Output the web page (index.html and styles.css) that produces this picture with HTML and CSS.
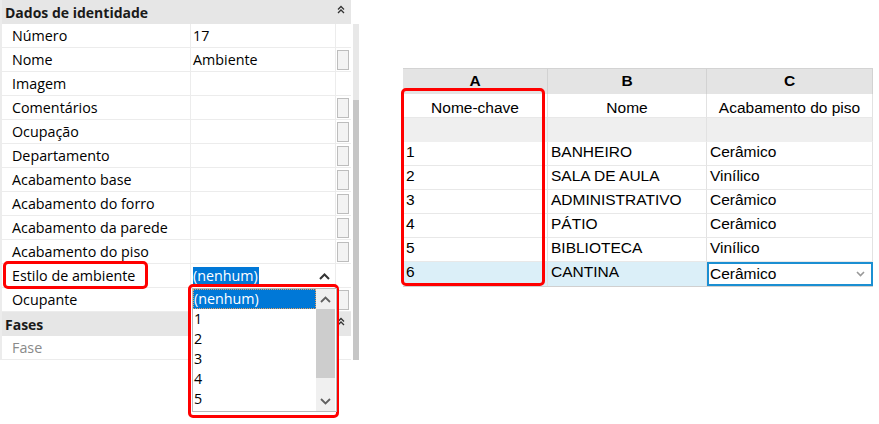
FILE: index.html
```html
<!DOCTYPE html>
<html>
<head>
<meta charset="utf-8">
<link rel="stylesheet" href="styles.css">
</head>
<body>
<div class="page">
  <div class="props">
    <div class="props-body">
      <div class="group-head"><span>Dados de identidade</span>
        <svg class="dbl" width="8" height="9" viewBox="0 0 8 9"><polyline points="1,4.5 4,1.5 7,4.5" fill="none" stroke="#333" stroke-width="1.3"/><polyline points="1,8 4,5 7,8" fill="none" stroke="#333" stroke-width="1.3"/></svg>
      </div>
      <div class="row"><div class="lbl">Número</div><div class="val">17</div><div class="bcell"></div></div>
      <div class="row"><div class="lbl">Nome</div><div class="val">Ambiente</div><div class="bcell"><div class="ebtn"></div></div></div>
      <div class="row"><div class="lbl">Imagem</div><div class="val"></div><div class="bcell"></div></div>
      <div class="row"><div class="lbl">Comentários</div><div class="val"></div><div class="bcell"><div class="ebtn"></div></div></div>
      <div class="row"><div class="lbl">Ocupação</div><div class="val"></div><div class="bcell"><div class="ebtn"></div></div></div>
      <div class="row"><div class="lbl">Departamento</div><div class="val"></div><div class="bcell"><div class="ebtn"></div></div></div>
      <div class="row"><div class="lbl">Acabamento base</div><div class="val"></div><div class="bcell"><div class="ebtn"></div></div></div>
      <div class="row"><div class="lbl">Acabamento do forro</div><div class="val"></div><div class="bcell"><div class="ebtn"></div></div></div>
      <div class="row"><div class="lbl">Acabamento da parede</div><div class="val"></div><div class="bcell"><div class="ebtn"></div></div></div>
      <div class="row"><div class="lbl">Acabamento do piso</div><div class="val"></div><div class="bcell"><div class="ebtn"></div></div></div>
      <div class="row"><div class="lbl">Estilo de ambiente</div><div class="val combo"><span class="sel">(nenhum)</span>
        <svg class="up" width="11" height="7" viewBox="0 0 11 7"><polyline points="1,6 5.5,1.5 10,6" fill="none" stroke="#333" stroke-width="2"/></svg></div><div class="bcell"></div></div>
      <div class="row"><div class="lbl">Ocupante</div><div class="val"></div><div class="bcell"><div class="ebtn"></div></div></div>
      <div class="group-head"><span>Fases</span>
        <svg class="dbl" width="8" height="9" viewBox="0 0 8 9"><polyline points="1,4.5 4,1.5 7,4.5" fill="none" stroke="#333" stroke-width="1.3"/><polyline points="1,8 4,5 7,8" fill="none" stroke="#333" stroke-width="1.3"/></svg>
      </div>
      <div class="row last"><div class="lbl muted">Fase</div><div class="val"></div><div class="bcell"></div></div>
    </div>
    <div class="vscroll"><div class="vtrack"></div><div class="vthumb"></div></div>

    <div class="mark mark-estilo"></div>

    <div class="dropdown">
      <div class="listbox">
        <div class="items">
          <div class="item active"><span>(nenhum)</span></div>
          <div class="item">1</div>
          <div class="item">2</div>
          <div class="item">3</div>
          <div class="item">4</div>
          <div class="item">5</div>
        </div>
        <div class="lscroll">
          <div class="arrow"><svg width="11" height="7" viewBox="0 0 11 7"><polyline points="1,6 5.5,1.5 10,6" fill="none" stroke="#606060" stroke-width="1.8"/></svg></div>
          <div class="lthumb"></div>
          <div class="lspace"></div>
          <div class="arrow"><svg width="11" height="7" viewBox="0 0 11 7"><polyline points="1,1 5.5,5.5 10,1" fill="none" stroke="#606060" stroke-width="1.8"/></svg></div>
        </div>
      </div>
    </div>
  </div>

  <div class="sheet">
    <div class="grid">
      <div class="hd">A</div><div class="hd">B</div><div class="hd">C</div>
      <div class="cell ctr">Nome-chave</div><div class="cell ctr">Nome</div><div class="cell ctr">Acabamento do piso</div>
      <div class="cell gray"></div><div class="cell gray"></div><div class="cell gray"></div>
      <div class="cell">1</div><div class="cell">BANHEIRO</div><div class="cell">Cerâmico</div>
      <div class="cell">2</div><div class="cell">SALA DE AULA</div><div class="cell">Vinílico</div>
      <div class="cell">3</div><div class="cell">ADMINISTRATIVO</div><div class="cell">Cerâmico</div>
      <div class="cell">4</div><div class="cell">PÁTIO</div><div class="cell">Cerâmico</div>
      <div class="cell">5</div><div class="cell">BIBLIOTECA</div><div class="cell">Vinílico</div>
      <div class="cell selrow">6</div><div class="cell selrow">CANTINA</div>
      <div class="cell editcell"><span>Cerâmico</span><svg width="9" height="6" viewBox="0 0 9 6"><polyline points="1,1 4.5,4.5 8,1" fill="none" stroke="#999" stroke-width="1.6"/></svg></div>
    </div>
    <div class="mark mark-col"></div>
  </div>
</div>
</body>
</html>
```

FILE: styles.css
```css
html, body { margin: 0; padding: 0; background: #fff; }
body { width: 879px; height: 424px; overflow: hidden; }

.page {
  display: flex;
  align-items: flex-start;
}

/* ---------- property panel ---------- */
.props {
  position: relative;
  display: flex;
  width: 359px;
  font-family: "Open Sans", "Noto Sans", sans-serif;
  font-size: 14.3px;
  color: #000;
}
.props-body {
  width: 350px;
  border-left: 2px solid #ececec;
}
.group-head {
  height: 24px;
  background: #e6e6e6;
  display: flex;
  align-items: center;
  justify-content: space-between;
  padding-left: 3px;
  padding-right: 6px;
  font-weight: 700;
  font-size: 14px;
  color: #1a1a1a;
  box-sizing: border-box;
}
.dbl { margin-top: -5px; }
.row {
  display: flex;
  height: 24px;
  border-bottom: 1px solid #ececec;
  box-sizing: border-box;
}
.lbl {
  width: 189px;
  padding-left: 10px;
  box-sizing: border-box;
  border-right: 1px solid #ececec;
  line-height: 23px;
  white-space: nowrap;
}
.muted { color: #8a8a8a; }
.val {
  width: 145px;
  padding-left: 2px;
  box-sizing: border-box;
  border-right: 1px solid #ececec;
  line-height: 23px;
  white-space: nowrap;
}
.combo {
  display: flex;
  align-items: center;
  justify-content: space-between;
  padding-right: 5px;
}
.sel {
  background: #0078d7;
  color: #fff;
  height: 18px;
  line-height: 18px;
  padding-right: 1px;
  margin-top: 1px;
}
.up { margin-top: 2px; }
.bcell {
  width: 14px;
  display: flex;
  padding-top: 2px;
  padding-left: 1px;
  box-sizing: border-box;
}
.ebtn {
  width: 12px;
  height: 20px;
  box-sizing: border-box;
  border: 1px solid #bdbdbd;
  background: #f3f3f3;
}
.vscroll {
  width: 6px;
  margin-left: 2px;
  padding-top: 24px;
  display: flex;
  flex-direction: column;
}
.vtrack { height: 76px; background: #e8e8e8; }
.vthumb { height: 260px; background: #c6c6c6; }

/* ---------- annotation marks ---------- */
.mark {
  position: absolute;
  border: 3px solid #ff0000;
  border-radius: 5px;
  box-sizing: border-box;
  pointer-events: none;
}
.mark-estilo { left: 3px; top: 261px; width: 145px; height: 28px; }

/* ---------- dropdown list ---------- */
.dropdown {
  position: absolute;
  left: 188px;
  top: 284px;
  width: 151px;
  height: 134px;
  border: 3px solid #ff0000;
  border-radius: 5px;
  box-sizing: border-box;
  padding: 1px 0 3px 1px;
  background: #fff;
}
.listbox {
  width: 145px;
  height: 124px;
  border: 1px solid #b9b9b9;
  box-sizing: border-box;
  display: flex;
}
.items { width: 123px; }
.item {
  height: 20px;
  line-height: 20px;
  padding-left: 1px;
  font-size: 14.3px;
}
.item.active {
  background: #0078d7;
  color: #fff;
  outline: 1px dotted #e8a060;
  outline-offset: -1px;
}
.lscroll {
  width: 19px;
  display: flex;
  flex-direction: column;
  background: #f0f0f0;
}
.arrow {
  height: 20px;
  display: flex;
  align-items: center;
  justify-content: center;
}
.lthumb { height: 69px; background: #cdcdcd; }
.lspace { flex: 1; }

/* ---------- schedule sheet ---------- */
.sheet {
  position: relative;
  margin-left: 44px;
  margin-top: 68px;
  font-family: "Liberation Sans", Arial, sans-serif;
  font-size: 15.5px;
  color: #000;
}
.grid {
  display: grid;
  grid-template-columns: 145px 159px 166px;
  border-top: 1px solid #d3d3d3;
  border-bottom: 1px solid #d0d0d0;
  width: 470px;
}
.hd {
  height: 25px;
  background: #e4e4e4;
  font-weight: 700;
  text-align: center;
  line-height: 23px;
  border-right: 1px solid #d2d2d2;
  box-sizing: border-box;
}
.cell {
  height: 24px;
  line-height: 19px;
  padding-left: 3px;
  border-right: 1px solid #e2e2e2;
  border-bottom: 1px solid #e8e8e8;
  box-sizing: border-box;
  white-space: nowrap;
}
.cell.ctr { text-align: center; padding-left: 0; padding-top: 5px; line-height: 18px; }
.cell.gray { background: #efefef; border-bottom-color: #efefef; }
.cell.selrow { background: #dbeff8; border-bottom: none; }
.editcell {
  border: 2px solid #1b8fd2;
  display: flex;
  align-items: center;
  justify-content: space-between;
  padding-left: 1px;
  padding-right: 6px;
  line-height: 20px;
}
.mark-col { left: -2px; top: 20px; width: 144px; height: 198px; }
```
